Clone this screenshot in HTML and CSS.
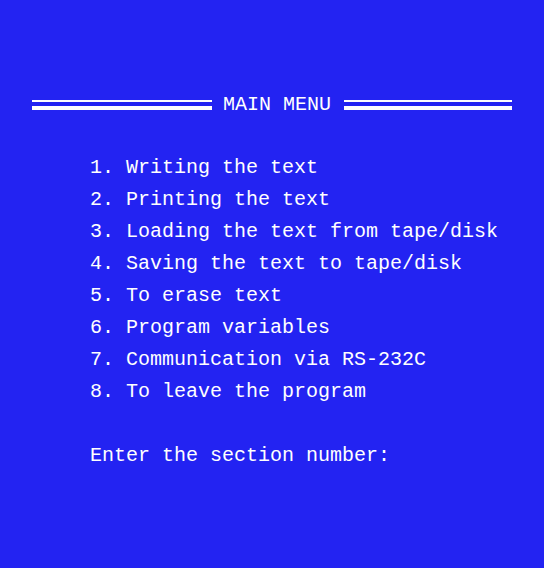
FILE: index.html
```html
<!DOCTYPE html>
<html>
<head>
<meta charset="utf-8">
<link rel="stylesheet" href="styles.css">
</head>
<body>
<div class="screen">
  <div class="title-row">
    <div class="rule rule-left"></div>
    <div class="title">MAIN MENU</div>
    <div class="rule rule-right"></div>
  </div>
  <ol class="menu">
    <li>1. Writing the text</li>
    <li>2. Printing the text</li>
    <li>3. Loading the text from tape/disk</li>
    <li>4. Saving the text to tape/disk</li>
    <li>5. To erase text</li>
    <li>6. Program variables</li>
    <li>7. Communication via RS-232C</li>
    <li>8. To leave the program</li>
  </ol>
  <div class="prompt">Enter the section number:</div>
</div>
</body>
</html>
```
FILE: styles.css
```css
html, body {
  margin: 0;
  padding: 0;
  background: #2323f2;
}
.screen {
  width: 544px;
  height: 568px;
  background: #2323f2;
  color: #ffffff;
  font-family: "Liberation Mono", "DejaVu Sans Mono", monospace;
  font-size: 20px;
  line-height: 32px;
  padding-top: 89px;
  box-sizing: border-box;
}
.title-row {
  display: flex;
  align-items: center;
  height: 32px;
  padding-left: 32px;
}
.rule {
  height: 4px;
  border-top: 2px solid #ffffff;
  border-bottom: 4px solid #ffffff;
}
.rule-left {
  width: 180px;
  margin-right: 11px;
}
.rule-right {
  width: 168px;
  margin-left: 13px;
}
.title {
  white-space: pre;
}
.menu {
  list-style: none;
  margin: 31px 0 0 0;
  padding: 0 0 0 90px;
}
.menu li {
  height: 32px;
  white-space: pre;
}
.prompt {
  margin-top: 32px;
  padding-left: 90px;
  white-space: pre;
}
```
